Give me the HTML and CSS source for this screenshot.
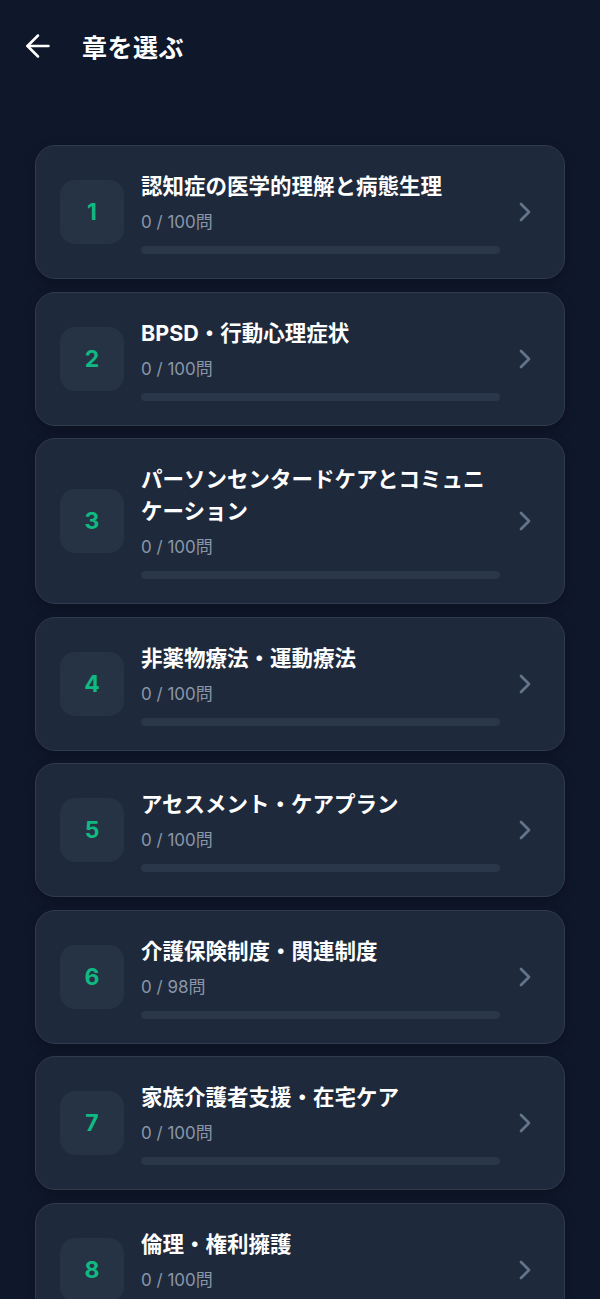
FILE: index.html
```html
<!DOCTYPE html>
<html lang="ja">
<head>
  <meta charset="UTF-8" />
  <meta name="viewport" content="width=device-width, initial-scale=1.0"/>
  <title>章を選ぶ</title>
  <link rel="stylesheet" href="styles.css">
</head>
<body>
  <header class="top-bar">
    <button class="back-btn" aria-label="戻る">
      <svg width="36" height="36" viewBox="0 0 24 24" fill="none" stroke="currentColor" stroke-width="1.7" stroke-linecap="round" stroke-linejoin="round">
        <path d="m12 19-7-7 7-7"/>
        <path d="M19 12H5"/>
      </svg>
    </button>
    <h1>章を選ぶ</h1>
  </header>

  <main class="chapter-list">
    <a class="chapter-card" href="#">
      <div class="chapter-num">1</div>
      <div class="chapter-body">
        <div class="chapter-title">認知症の医学的理解と病態生理</div>
        <div class="chapter-count">0 / 100問</div>
        <div class="progress"><div class="progress-fill" style="width: 0%"></div></div>
      </div>
      <svg class="chevron" width="32" height="32" viewBox="0 0 24 24" fill="none" stroke="currentColor" stroke-width="2" stroke-linecap="round" stroke-linejoin="round"><path d="m9 18 6-6-6-6"/></svg>
    </a>

    <a class="chapter-card" href="#">
      <div class="chapter-num">2</div>
      <div class="chapter-body">
        <div class="chapter-title">BPSD・行動心理症状</div>
        <div class="chapter-count">0 / 100問</div>
        <div class="progress"><div class="progress-fill" style="width: 0%"></div></div>
      </div>
      <svg class="chevron" width="32" height="32" viewBox="0 0 24 24" fill="none" stroke="currentColor" stroke-width="2" stroke-linecap="round" stroke-linejoin="round"><path d="m9 18 6-6-6-6"/></svg>
    </a>

    <a class="chapter-card" href="#">
      <div class="chapter-num">3</div>
      <div class="chapter-body">
        <div class="chapter-title">パーソンセンタードケアとコミュニケーション</div>
        <div class="chapter-count">0 / 100問</div>
        <div class="progress"><div class="progress-fill" style="width: 0%"></div></div>
      </div>
      <svg class="chevron" width="32" height="32" viewBox="0 0 24 24" fill="none" stroke="currentColor" stroke-width="2" stroke-linecap="round" stroke-linejoin="round"><path d="m9 18 6-6-6-6"/></svg>
    </a>

    <a class="chapter-card" href="#">
      <div class="chapter-num">4</div>
      <div class="chapter-body">
        <div class="chapter-title">非薬物療法・運動療法</div>
        <div class="chapter-count">0 / 100問</div>
        <div class="progress"><div class="progress-fill" style="width: 0%"></div></div>
      </div>
      <svg class="chevron" width="32" height="32" viewBox="0 0 24 24" fill="none" stroke="currentColor" stroke-width="2" stroke-linecap="round" stroke-linejoin="round"><path d="m9 18 6-6-6-6"/></svg>
    </a>

    <a class="chapter-card" href="#">
      <div class="chapter-num">5</div>
      <div class="chapter-body">
        <div class="chapter-title">アセスメント・ケアプラン</div>
        <div class="chapter-count">0 / 100問</div>
        <div class="progress"><div class="progress-fill" style="width: 0%"></div></div>
      </div>
      <svg class="chevron" width="32" height="32" viewBox="0 0 24 24" fill="none" stroke="currentColor" stroke-width="2" stroke-linecap="round" stroke-linejoin="round"><path d="m9 18 6-6-6-6"/></svg>
    </a>

    <a class="chapter-card" href="#">
      <div class="chapter-num">6</div>
      <div class="chapter-body">
        <div class="chapter-title">介護保険制度・関連制度</div>
        <div class="chapter-count">0 / 98問</div>
        <div class="progress"><div class="progress-fill" style="width: 0%"></div></div>
      </div>
      <svg class="chevron" width="32" height="32" viewBox="0 0 24 24" fill="none" stroke="currentColor" stroke-width="2" stroke-linecap="round" stroke-linejoin="round"><path d="m9 18 6-6-6-6"/></svg>
    </a>

    <a class="chapter-card" href="#">
      <div class="chapter-num">7</div>
      <div class="chapter-body">
        <div class="chapter-title">家族介護者支援・在宅ケア</div>
        <div class="chapter-count">0 / 100問</div>
        <div class="progress"><div class="progress-fill" style="width: 0%"></div></div>
      </div>
      <svg class="chevron" width="32" height="32" viewBox="0 0 24 24" fill="none" stroke="currentColor" stroke-width="2" stroke-linecap="round" stroke-linejoin="round"><path d="m9 18 6-6-6-6"/></svg>
    </a>

    <a class="chapter-card" href="#">
      <div class="chapter-num">8</div>
      <div class="chapter-body">
        <div class="chapter-title">倫理・権利擁護</div>
        <div class="chapter-count">0 / 100問</div>
        <div class="progress"><div class="progress-fill" style="width: 0%"></div></div>
      </div>
      <svg class="chevron" width="32" height="32" viewBox="0 0 24 24" fill="none" stroke="currentColor" stroke-width="2" stroke-linecap="round" stroke-linejoin="round"><path d="m9 18 6-6-6-6"/></svg>
    </a>
  </main>
</body>
</html>
```

FILE: styles.css
```css
* {
  box-sizing: border-box;
  font-family: 'Inter', 'Noto Sans CJK JP', 'Noto Sans', sans-serif;
}

html, body {
  margin: 0;
  padding: 0;
}

body {
  background-color: #0f172a;
  color: #f1f5f9;
  min-height: 100vh;
}

/* ======== HEADER ========= */
.top-bar {
  display: flex;
  align-items: center;
  height: 92px;
  padding: 0 20px;
}

.back-btn {
  background: none;
  border: none;
  padding: 0;
  color: #ffffff;
  width: 36px;
  height: 36px;
  display: flex;
  align-items: center;
  justify-content: center;
  cursor: pointer;
}

.top-bar h1 {
  margin: 0 0 0 26px;
  font-size: 25px;
  font-weight: 700;
  color: #ffffff;
  letter-spacing: 0.5px;
}

/* ======== LIST ========= */
.chapter-list {
  display: flex;
  flex-direction: column;
  gap: 12.5px;
  padding: 53px 35px 40px;
}

.chapter-card {
  display: flex;
  align-items: center;
  padding: 24px 23px 24px 24px;
  background-color: #1e293b;
  border: 1px solid #2f3b4f;
  border-radius: 20px;
  text-decoration: none;
  color: inherit;
  box-shadow: 0 4px 12px rgba(0, 0, 0, 0.25);
}

.chapter-num {
  flex: none;
  width: 64px;
  height: 64px;
  margin-right: 17px;
  border-radius: 15px;
  background-color: #263345;
  display: flex;
  align-items: center;
  justify-content: center;
  color: #10b981;
  font-size: 23px;
  font-weight: 700;
}

.chapter-body {
  flex: 1;
  min-width: 0;
  display: flex;
  flex-direction: column;
}

.chapter-title {
  font-size: 21.5px;
  line-height: 32px;
  font-weight: 700;
  color: #ffffff;
}

.chapter-count {
  margin-top: 8px;
  font-size: 17px;
  line-height: 24px;
  color: #8a96a8;
}

.progress {
  margin-top: 12px;
  height: 8px;
  border-radius: 4px;
  background-color: #2a3649;
  overflow: hidden;
}

.progress-fill {
  height: 100%;
  background-color: #10b981;
}

.chevron {
  flex: none;
  color: #64748b;
  margin-left: 9px;
}
```
